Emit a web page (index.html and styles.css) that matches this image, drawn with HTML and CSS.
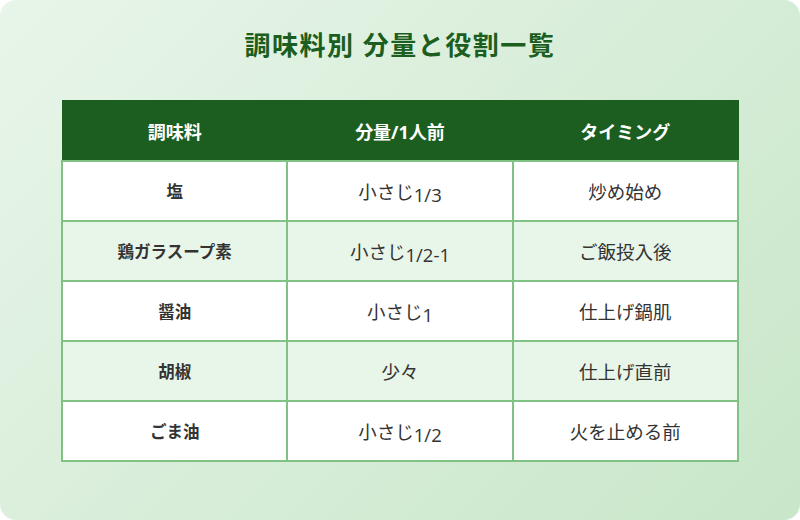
FILE: index.html
```html
<!DOCTYPE html>
<html lang="ja">
<head>
<meta charset="utf-8">
<link rel="stylesheet" href="styles.css">
</head>
<body>
<div class="card">
  <h1 class="title">調味料別 分量と役割一覧</h1>
  <table class="tbl">
    <thead>
      <tr><th>調味料</th><th>分量/1人前</th><th>タイミング</th></tr>
    </thead>
    <tbody>
      <tr><td class="name">塩</td><td>小さじ<span class="num">1/3</span></td><td>炒め始め</td></tr>
      <tr class="alt"><td class="name">鶏ガラスープ素</td><td>小さじ<span class="num">1/2-1</span></td><td>ご飯投入後</td></tr>
      <tr><td class="name">醤油</td><td>小さじ<span class="num">1</span></td><td>仕上げ鍋肌</td></tr>
      <tr class="alt"><td class="name">胡椒</td><td>少々</td><td>仕上げ直前</td></tr>
      <tr><td class="name">ごま油</td><td>小さじ<span class="num">1/2</span></td><td>火を止める前</td></tr>
    </tbody>
  </table>
</div>
</body>
</html>
```
FILE: styles.css
```css
html, body {
  margin: 0;
  padding: 0;
  background: #ffffff;
}
body {
  font-family: "Open Sans", "Noto Sans CJK JP", sans-serif;
  color: #333333;
}
.card {
  width: 800px;
  height: 520px;
  box-sizing: border-box;
  border-radius: 16px;
  background: linear-gradient(135deg, #e8f5e9 0%, #c8e6c9 100%);
  padding-top: 25px;
  overflow: hidden;
}
.title {
  margin: 0;
  height: 75px;
  text-align: center;
  font-size: 26px;
  font-weight: 700;
  color: #1b5e20;
  line-height: 40px;
  letter-spacing: 1.5px;
}
.tbl {
  width: 678px;
  margin: 0 auto;
  border-collapse: collapse;
  table-layout: fixed;
  font-size: 18.5px;
}
.tbl th {
  background: #1b5e20;
  color: #ffffff;
  font-weight: 700;
  font-size: 18px;
  height: 59px;
  padding: 0;
  border: 1px solid #1b5e20;
}
.tbl td {
  height: 58px;
  padding: 0;
  text-align: center;
  background: #ffffff;
  border: 2px solid #7fc283;
}
.tbl tr.alt td {
  background: #e8f5e9;
}
.tbl td.name {
  font-weight: 700;
  font-size: 16.5px;
}
.num {
  position: relative;
  top: 3px;
}
```
